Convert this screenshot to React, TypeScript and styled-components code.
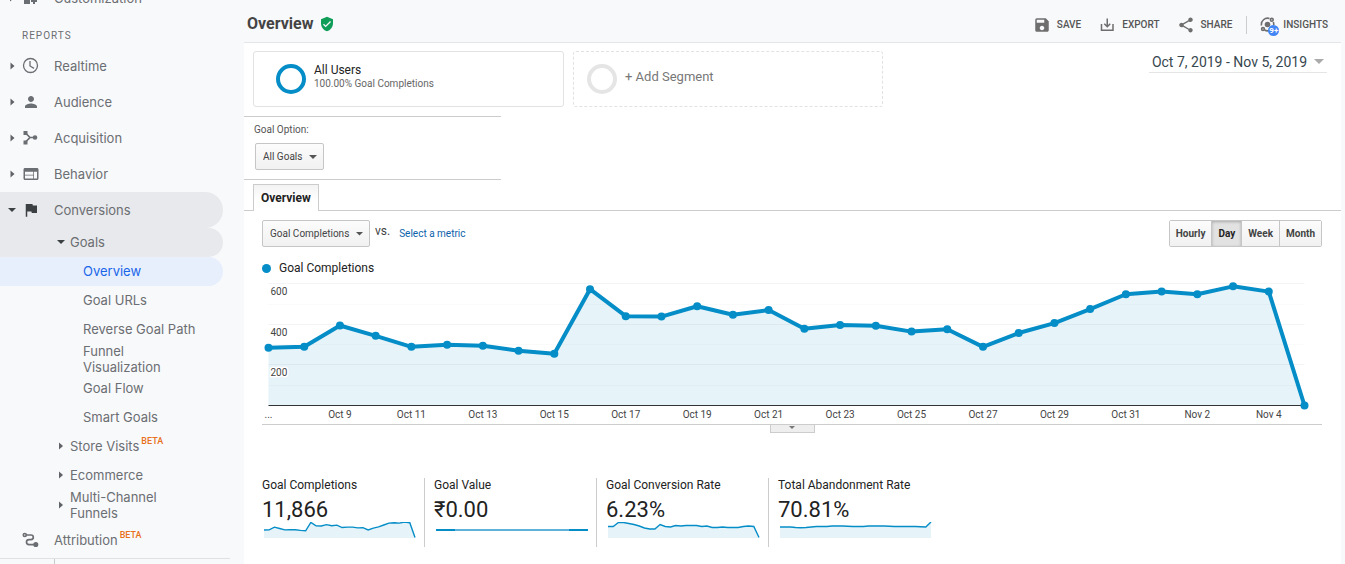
import React, { useLayoutEffect, useRef, useState } from "react";
import styled, { createGlobalStyle, css } from "styled-components";
import { MdFlag, MdPerson, MdSave, MdShare, MdVerifiedUser, MdWeb } from "react-icons/md";

const BLUE = "#058dc7";
const ROBOTO = 'Roboto, "Liberation Sans", sans-serif';

const GlobalStyle = createGlobalStyle`
  *, *::before, *::after { box-sizing: border-box; }
  body { margin: 0; background: #f8f9fb; font-family: ${ROBOTO}; color: #222; }
  button, select { font-family: inherit; margin: 0; }
`;

/* ---------- shell ---------- */

const Page = styled.div`
  display: flex;
  height: 100vh;
  overflow: hidden;
`;

const Sidebar = styled.aside`
  flex: 0 0 244px;
  display: flex;
  flex-direction: column;
  overflow: hidden;
  font-family: Inter, "Open Sans", sans-serif;
  font-size: 13px;
  line-height: 16px;
  color: #6b6e72;
`;

const Nav = styled.nav`
  width: 223px;
  margin-top: -20px;
  flex: none;
`;

const NavHeading = styled.h2`
  margin: 0;
  height: 32px;
  padding: 12px 0 0 22px;
  font-family: ${ROBOTO};
  font-size: 10px;
  font-weight: 400;
  line-height: 16px;
  letter-spacing: 1px;
`;

type Level = 1 | 2 | 3;
const indents: Record<Level, number> = { 1: 10, 2: 59, 3: 83 };

const NavRow = styled.a<{ $level: Level; $tone?: "open" | "active"; $lines?: number }>`
  display: flex;
  align-items: center;
  height: ${(p) => (p.$level === 1 ? 36 : p.$lines === 2 ? 30 : 29)}px;
  padding-left: ${(p) => indents[p.$level]}px;
  padding-bottom: ${(p) => (p.$lines === 2 ? 0 : 1)}px;
  color: inherit;
  text-decoration: none;
  border-radius: 0 18px 18px 0;
  ${(p) => p.$tone === "open" && css`background: #e8e9ec;`}
  ${(p) => p.$tone === "active" && css`background: #e7effd; color: #1a66e8;`}
`;

const ArrowSlot = styled.span<{ $level: Level; $open?: boolean }>`
  display: flex;
  flex: none;
  width: ${(p) => (p.$level === 1 ? 12 : 11)}px;
  ${(p) => p.$open && css`margin-left: -2px; padding-right: 2px; box-sizing: content-box;`}
`;

const IconSlot = styled.span<{ $dark?: boolean }>`
  display: flex;
  flex: none;
  width: 32px;
  color: ${(p) => (p.$dark ? "#3c4043" : "#6b6e72")};
`;

const Beta = styled.sup`
  margin: 0 0 10px 2px;
  font-family: ${ROBOTO};
  font-size: 9px;
  font-weight: 500;
  line-height: 10px;
  color: #e8711c;
`;

const NavFooter = styled.div`
  padding-top: 2px;
`;

const SidebarFoot = styled.div`
  flex: 1;
  margin-right: 14px;
  padding-left: 54px;
  border-top: 1px solid #dfe1e5;
  &::before {
    content: "";
    display: block;
    height: 100%;
    border-left: 1px solid #c8cacd;
  }
`;

const Main = styled.main`
  flex: 1;
  min-width: 0;
  margin-right: 4px;
  background: #fff;
`;

/* ---------- header ---------- */

const Header = styled.header`
  display: flex;
  align-items: center;
  justify-content: space-between;
  height: 43px;
  padding: 5px 13px 0 3px;
  background: #f8f9fb;
  border-bottom: 1px solid #e3e5e8;
`;

const Title = styled.h1`
  display: flex;
  align-items: center;
  gap: 6px;
  margin: 0;
  font-size: 16px;
  font-weight: 700;
  color: #444;
`;

const Toolbar = styled.div`
  display: flex;
  align-items: center;
  padding-top: 2px;
`;

const ToolButton = styled.button`
  display: flex;
  align-items: center;
  gap: 6px;
  height: 24px;
  margin-left: 17px;
  padding: 0;
  border: 0;
  background: none;
  font-size: 10px;
  font-weight: 500;
  color: #555;
  svg { color: #6e6e6e; }
`;

const Divider = styled.span`
  width: 1px;
  height: 18px;
  margin: 0 -4px 0 14px;
  background: #ccc;
`;

const InsightsIcon = styled.span`
  position: relative;
  display: flex;
  margin-right: -2px;
`;

const Badge = styled.span`
  position: absolute;
  left: 8px;
  top: 9px;
  width: 11px;
  height: 11px;
  border-radius: 50%;
  background: #4285f4;
  color: #fff;
  font-size: 8px;
  font-weight: 700;
  line-height: 11px;
  text-align: center;
`;

/* ---------- segments ---------- */

const SegmentBar = styled.section`
  display: flex;
  align-items: flex-start;
  gap: 9px;
  padding: 8px 14px 9px 9px;
`;

const Segment = styled.button<{ $dashed?: boolean }>`
  display: flex;
  align-items: center;
  gap: 8px;
  flex: 0 1 ${(p) => (p.$dashed ? 310 : 311)}px;
  height: 56px;
  padding: 0 0 0 ${(p) => (p.$dashed ? 13 : 22)}px;
  border: 1px ${(p) => (p.$dashed ? "dashed" : "solid")} #e2e2e2;
  border-radius: 3px;
  background: #fff;
  font-size: ${(p) => (p.$dashed ? 13 : 12)}px;
  text-align: left;
  color: ${(p) => (p.$dashed ? "#777" : "#222")};
`;

const Ring = styled.span<{ $color: string }>`
  flex: none;
  width: 30px;
  height: 30px;
  border: 4px solid ${(p) => p.$color};
  border-radius: 50%;
`;

const SegmentText = styled.span`
  display: flex;
  flex-direction: column;
  line-height: 14px;
  padding-bottom: 5px;
`;

const SegmentNote = styled.span`
  font-size: 10px;
  line-height: 14px;
  color: #666;
`;

const DateRange = styled.button`
  display: flex;
  align-items: center;
  gap: 7px;
  margin-left: auto;
  height: 22px;
  padding: 0 3px;
  border: 0;
  border-bottom: 1px solid #e5e5e5;
  background: none;
  font-size: 14px;
  white-space: nowrap;
  color: #37474f;
`;

/* ---------- controls ---------- */

const GoalOption = styled.section`
  display: flex;
  flex-direction: column;
  align-items: flex-start;
  width: 257px;
  height: 64px;
  padding: 6px 11px 0;
  border: solid #ccc;
  border-width: 1px 0;
`;

const GoalLabel = styled.label`
  margin: 0 0 6px -1px;
  font-size: 10px;
  line-height: 14px;
  color: #555;
`;

const SelectWrap = styled.span<{ $width: number }>`
  position: relative;
  display: flex;
  width: ${(p) => p.$width}px;
  svg { position: absolute; right: 7px; top: 12px; pointer-events: none; }
`;

const Select = styled.select`
  appearance: none;
  width: 100%;
  height: 27px;
  padding: 0 0 0 7px;
  border: 1px solid #c6c6c6;
  border-radius: 2px;
  background: linear-gradient(#fcfcfc, #f1f1f1);
  font-size: 10px;
  color: #444;
`;

const Tabs = styled.div`
  display: flex;
  height: 31px;
  padding: 4px 9px 0;
  border-bottom: 1px solid #ccc;
`;

const Tab = styled.button`
  height: 27px;
  padding: 0 7px;
  border: 1px solid #ccc;
  border-bottom: 0;
  background: linear-gradient(#f3f3f3, #fff 60%);
  font-size: 12px;
  font-weight: 700;
  color: #222;
`;

const Report = styled.section`
  padding: 9px 19px 0 18px;
`;

const Controls = styled.div`
  display: flex;
  align-items: flex-start;
`;

const Versus = styled.span`
  margin: 3px 9px 0 5px;
  font-size: 12px;
  line-height: 16px;
  color: #444;
`;

const MetricLink = styled.a`
  margin-top: 6px;
  font-size: 10px;
  line-height: 16px;
  color: #0b62ab;
  text-decoration: none;
`;

const Granularity = styled.div`
  display: flex;
  margin-left: auto;
  border: 1px solid #c6c6c6;
  border-radius: 2px;
`;

const GrainButton = styled.button<{ $on?: boolean }>`
  height: 25px;
  padding: 0 6px;
  border: 0;
  background: ${(p) => (p.$on ? "#e2e2e2" : "linear-gradient(#fcfcfc, #f1f1f1)")};
  box-shadow: ${(p) => (p.$on ? "inset 0 1px 3px rgba(0, 0, 0, 0.25)" : "none")};
  font-size: 10px;
  font-weight: 700;
  color: ${(p) => (p.$on ? "#222" : "#444")};
  & + & { border-left: 1px solid #c6c6c6; }
`;

const Legend = styled.div`
  display: flex;
  align-items: center;
  gap: 8px;
  height: 16px;
  margin-top: 13px;
  font-size: 12px;
  &::before {
    content: "";
    width: 9px;
    height: 9px;
    border-radius: 50%;
    background: ${BLUE};
  }
`;

const ChartBox = styled.div`
  height: 149px;
  border-bottom: 1px solid #ccc;
  svg { display: block; overflow: visible; }
`;

const Handle = styled.button`
  display: flex;
  align-items: center;
  justify-content: center;
  width: 45px;
  height: 8px;
  margin: 0 auto;
  padding: 0 0 2px;
  border: 1px solid #ccc;
  border-top: 0;
  background: #eee;
`;

/* ---------- metrics ---------- */

const Metrics = styled.div`
  display: flex;
  margin-top: 45px;
`;

const MetricCard = styled.div`
  flex: 0 1 172px;
  height: 69px;
  padding-left: 9px;
  border-left: 1px solid #ccc;
  &:first-child { flex-basis: 162px; padding-left: 0; border-left: 0; }
`;

const MetricName = styled.div`
  font-size: 12px;
  line-height: 14px;
`;

const MetricValue = styled.div`
  padding-top: 5px;
  font-size: 22px;
  line-height: 25px;
`;

const Spark = styled.svg`
  display: block;
  width: 155px;
  height: 18px;
`;

/* ---------- drawings ---------- */

const Right = ({ big }: { big?: boolean }) => (
  <svg width={big ? 5 : 4} height="8" viewBox="0 0 4 8" fill="#5f6266" aria-hidden><path d="M0 .5v7L4 4z" /></svg>
);
const Down = ({ w = 8, color = "#3c4043" }: { w?: number; color?: string }) => (
  <svg width={w} height={w / 2} viewBox="0 0 8 4" fill={color} aria-hidden><path d="M0 0h8L4 4z" /></svg>
);
const Clock = () => (
  <svg width="17" height="17" viewBox="0 0 17 17" fill="none" stroke="currentColor" strokeWidth="1.3" aria-hidden>
    <circle cx="8.5" cy="8.5" r="7" /><path d="M8 4v5l4 2.4" />
  </svg>
);
const Acquire = () => (
  <svg width="17" height="17" viewBox="0 0 17 17" aria-hidden>
    <path d="M3.5 4l4.5 4.5-4.5 4.5M8 8.5h6" fill="none" stroke="currentColor" strokeWidth="1.7" />
    <g fill="currentColor"><rect x="1.5" y="2" width="4" height="4" /><rect x="1.5" y="11.5" width="4" height="4" /><circle cx="13" cy="8.5" r="2.3" /></g>
  </svg>
);
const Attribute = () => (
  <svg width="17" height="17" viewBox="0 0 17 17" fill="none" stroke="currentColor" strokeWidth="1.7" aria-hidden>
    <circle cx="2.8" cy="4" r="1.5" />
    <path d="M4.5 4H9a2.3 2.3 0 0 1 0 4.600H7a2.5 2.5 0 0 0 0 5h6" />
    <circle cx="13.8" cy="13.5" r="1.7" fill="currentColor" />
  </svg>
);
const Customize = () => (
  <svg width="17" height="17" viewBox="0 0 17 17" fill="currentColor" aria-hidden>
    <path d="M2 2h5v5H2zM2 9h6v6H2zM9 2h6v5H9zM11 9h2v2h2v2h-2v2h-2v-2H9v-2h2z" />
  </svg>
);
const ExportIcon = () => (
  <svg width="18" height="18" viewBox="0 0 18 18" fill="none" stroke="currentColor" strokeWidth="1.5" aria-hidden>
    <path d="M3.5 8v6.25h11.5V8M9.25 2.5v8M6.25 7.700l3 3 3-3" />
  </svg>
);
const Sense = () => (
  <svg width="19" height="18" viewBox="0 0 19 18" fill="none" stroke="currentColor" strokeWidth="1.6" aria-hidden>
    <circle cx="7.5" cy="8.5" r="2.8" fill="currentColor" stroke="none" />
    <path d="M1.5 9.5A6.2 6.2 0 0 1 9.5 2.5M4.5 14a6.2 6.2 0 0 0 5 .5M13.3 6a6.2 6.2 0 0 1 .4 3" />
    <circle cx="11.8" cy="3.8" r="1.4" /><circle cx="3" cy="13" r="1.4" />
  </svg>
);

/* ---------- chart ---------- */

const values = [
  284, 289, 394, 343, 289, 299, 294, 270, 255, 573, 440, 438, 489, 447, 470,
  378, 396, 393, 364, 376, 289, 357, 406, 475, 548, 561, 548, 587, 561, 0,
];
const dates = ["...", "Oct 9", "Oct 11", "Oct 13", "Oct 15", "Oct 17", "Oct 19", "Oct 21", "Oct 23", "Oct 25", "Oct 27", "Oct 29", "Oct 31", "Nov 2", "Nov 4"];

function Chart() {
  const box = useRef<HTMLDivElement>(null);
  const [width, setWidth] = useState(1060);
  useLayoutEffect(() => {
    const measure = () => box.current && setWidth(box.current.clientWidth);
    measure();
    window.addEventListener("resize", measure);
    return () => window.removeEventListener("resize", measure);
  }, []);
  const left = 6.5;
  const right = width - 17.5;
  const base = 129.5;
  const x = (i: number) => left + (i * (right - left)) / (values.length - 1);
  const y = (v: number) => base - v * 0.203;
  const grid = (v: number) => Math.floor(y(v)) + 0.5;
  const line = values.map((v, i) => `${x(i)},${y(v)}`).join(" ");
  return (
    <ChartBox ref={box}>
      <svg width={width} height="148" role="img" aria-label="Goal Completions per day">
        <polygon points={`${left},${base} ${line}`} fill="#e6f3f9" />
        {[100, 200, 300, 400, 500, 600].map((v) => (
          <line key={v} x1={left} x2={right} y1={grid(v)} y2={grid(v)} stroke={v % 200 ? "rgba(0,0,0,.02)" : "rgba(0,0,0,.045)"} />
        ))}
        <line x1={left} x2={right} y1={base} y2={base} stroke="#333" />
        <polyline points={line} fill="none" stroke={BLUE} strokeWidth="4" strokeLinejoin="round" />
        {values.map((v, i) => <circle key={i} cx={x(i)} cy={y(v)} r="4" fill={BLUE} />)}
        <g fontSize="10" fill="#444">
          {[200, 400, 600].map((v) => (
            <text key={v} x={left + 2} y={Math.floor(y(v)) + 12} stroke="#fff" strokeWidth="3" strokeLinejoin="round" paintOrder="stroke">{v}</text>
          ))}
          {dates.map((d, i) => <text key={d} x={x(i * 2)} y="142" textAnchor="middle">{d}</text>)}
        </g>
      </svg>
    </ChartBox>
  );
}

const sparks = {
  rate: [11, 11, 15, 15, 14, 13, 11.5, 9.5, 8.5, 8.5, 13, 11, 10.5, 12, 11.5, 12, 12, 12, 11, 11.5, 10, 10, 10.5, 10, 10, 10, 11, 11.5, 11, 0],
  abandon: [10.5, 10.5, 10.5, 10, 9.7, 10, 10.5, 11, 11, 11, 11.5, 11.5, 11.5, 11.3, 11, 11, 11, 11.5, 11.5, 11.5, 11.5, 11.2, 11, 11, 11, 11, 11, 10.7, 10.5, 15.5],
};

function Sparkline({ data }: { data?: number[] }) {
  if (!data) {
    return (
      <Spark aria-hidden>
        <path d="M2 8h152" stroke="#5fb2da" strokeWidth="2" />
        <path d="M2 8h19M135 8h19" stroke={BLUE} strokeWidth="2" />
      </Spark>
    );
  }
  const pts = data.map((v, i) => `${2 + (i * 151) / (data.length - 1)},${15.5 - v}`).join(" ");
  return (
    <Spark aria-hidden>
      <polygon points={`2,16 ${pts} 153,16`} fill="#e6f3f9" />
      <polyline points={pts} fill="none" stroke={BLUE} strokeWidth="1.4" />
    </Spark>
  );
}

/* ---------- page ---------- */

const topItems = [
  { label: "Realtime", icon: <Clock /> },
  { label: "Audience", icon: <MdPerson size={18} /> },
  { label: "Acquisition", icon: <Acquire /> },
  { label: "Behavior", icon: <MdWeb size={18} /> },
];

const metrics = [
  { name: "Goal Completions", value: "11,866", data: values.map((v) => v / 38) },
  { name: "Goal Value", value: "₹0.00" },
  { name: "Goal Conversion Rate", value: "6.23%", data: sparks.rate },
  { name: "Total Abandonment Rate", value: "70.81%", data: sparks.abandon },
];

export default function App() {
  return (
    <>
      <GlobalStyle />
      <Page>
        <Sidebar>
          <Nav>
            <NavRow href="#customization" $level={1}>
              <ArrowSlot $level={1}><Right /></ArrowSlot><IconSlot><Customize /></IconSlot>Customization
            </NavRow>
            <NavHeading>REPORTS</NavHeading>
            {topItems.map((t) => (
              <NavRow key={t.label} href={`#${t.label}`} $level={1}>
                <ArrowSlot $level={1}><Right big /></ArrowSlot><IconSlot>{t.icon}</IconSlot>{t.label}
              </NavRow>
            ))}
            <NavRow href="#conversions" $level={1} $tone="open">
              <ArrowSlot $level={1} $open><Down /></ArrowSlot><IconSlot $dark><MdFlag size={18} /></IconSlot>Conversions
            </NavRow>
            <NavRow href="#goals" $level={2} $tone="open"><ArrowSlot $level={2} $open><Down /></ArrowSlot>Goals</NavRow>
            <NavRow href="#overview" $level={3} $tone="active" aria-current="page">Overview</NavRow>
            <NavRow href="#urls" $level={3}>Goal URLs</NavRow>
            <NavRow href="#reverse" $level={3}>Reverse Goal Path</NavRow>
            <NavRow href="#funnel" $level={3} $lines={2}><span>Funnel<br />Visualization</span></NavRow>
            <NavRow href="#flow" $level={3}>Goal Flow</NavRow>
            <NavRow href="#smart" $level={3}>Smart Goals</NavRow>
            <NavRow href="#visits" $level={2}><ArrowSlot $level={2}><Right /></ArrowSlot>Store Visits<Beta>BETA</Beta></NavRow>
            <NavRow href="#ecommerce" $level={2}><ArrowSlot $level={2}><Right /></ArrowSlot>Ecommerce</NavRow>
            <NavRow href="#multi" $level={2} $lines={2}><ArrowSlot $level={2}><Right /></ArrowSlot><span>Multi-Channel<br />Funnels</span></NavRow>
            <NavFooter>
              <NavRow href="#attribution" $level={1}>
                <ArrowSlot $level={1} /><IconSlot><Attribute /></IconSlot>Attribution<Beta>BETA</Beta>
              </NavRow>
            </NavFooter>
          </Nav>
          <SidebarFoot />
        </Sidebar>

        <Main>
          <Header>
            <Title>Overview <MdVerifiedUser size={16} color="#0f9d58" /></Title>
            <Toolbar>
              <ToolButton><MdSave size={18} />SAVE</ToolButton>
              <ToolButton><ExportIcon />EXPORT</ToolButton>
              <ToolButton><MdShare size={18} />SHARE</ToolButton>
              <Divider />
              <ToolButton><InsightsIcon><Sense /><Badge>9+</Badge></InsightsIcon>INSIGHTS</ToolButton>
            </Toolbar>
          </Header>

          <SegmentBar>
            <Segment>
              <Ring $color={BLUE} />
              <SegmentText>All Users<SegmentNote>100.00% Goal Completions</SegmentNote></SegmentText>
            </Segment>
            <Segment $dashed>
              <Ring $color="#e5e5e5" />
              <SegmentText>+ Add Segment</SegmentText>
            </Segment>
            <DateRange>Oct 7, 2019 - Nov 5, 2019 <Down w={10} color="#aaa" /></DateRange>
          </SegmentBar>

          <GoalOption>
            <GoalLabel htmlFor="goal">Goal Option:</GoalLabel>
            <SelectWrap $width={69}>
              <Select id="goal"><option>All Goals</option></Select>
              <Down color="#555" />
            </SelectWrap>
          </GoalOption>

          <Tabs><Tab>Overview</Tab></Tabs>

          <Report>
            <Controls>
              <SelectWrap $width={108}>
                <Select aria-label="Metric"><option>Goal Completions</option></Select>
                <Down w={7} color="#555" />
              </SelectWrap>
              <Versus>vs.</Versus>
              <MetricLink href="#metric">Select a metric</MetricLink>
              <Granularity>
                <GrainButton>Hourly</GrainButton>
                <GrainButton $on>Day</GrainButton>
                <GrainButton>Week</GrainButton>
                <GrainButton>Month</GrainButton>
              </Granularity>
            </Controls>
            <Legend>Goal Completions</Legend>
            <Chart />
            <Handle aria-label="Resize chart"><Down w={6} color="#777" /></Handle>
            <Metrics>
              {metrics.map((m) => (
                <MetricCard key={m.name}>
                  <MetricName>{m.name}</MetricName>
                  <MetricValue>{m.value}</MetricValue>
                  <Sparkline data={m.data} />
                </MetricCard>
              ))}
            </Metrics>
          </Report>
        </Main>
      </Page>
    </>
  );
}
